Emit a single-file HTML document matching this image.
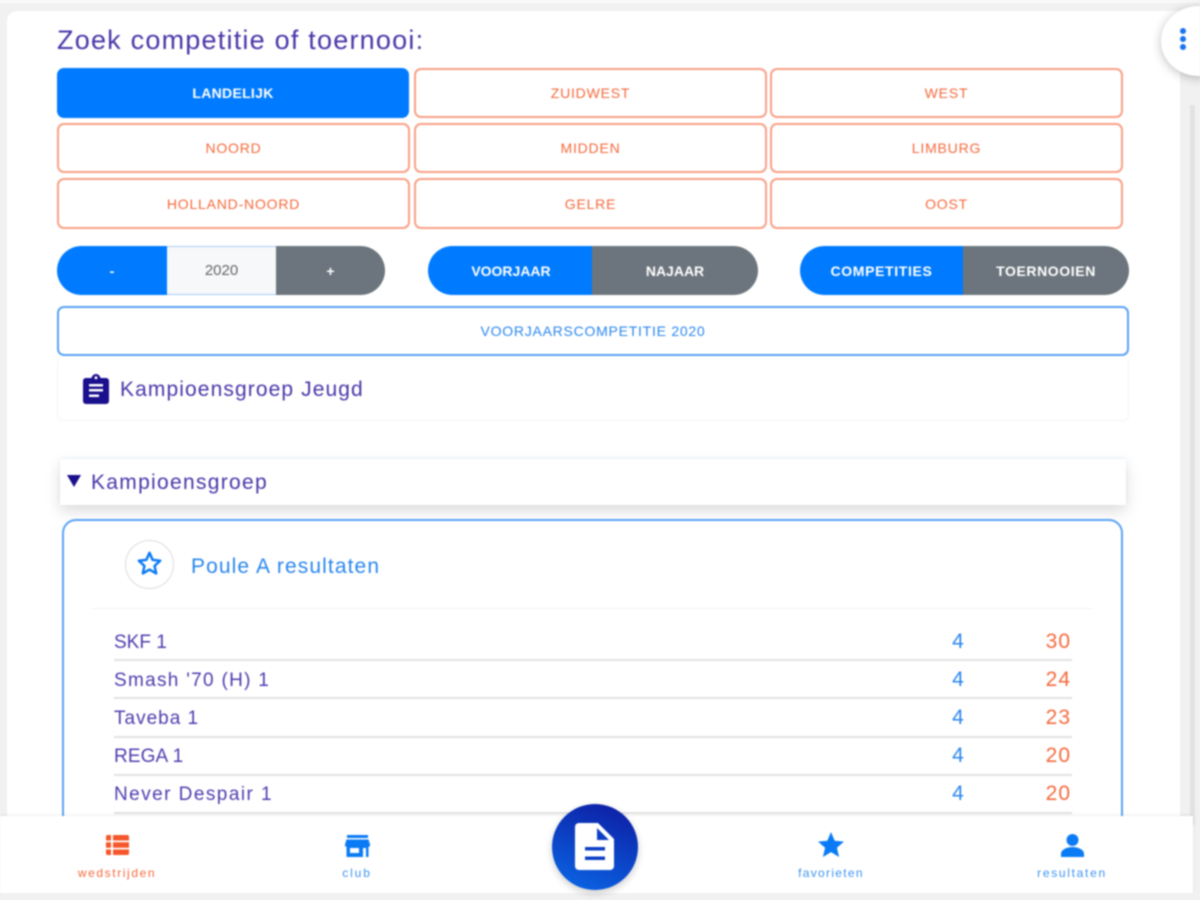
<!DOCTYPE html>
<html><head><meta charset="utf-8"><style>
html,body{margin:0;padding:0;width:1200px;height:900px;overflow:hidden;background:#f1f1f1}
*{box-sizing:border-box}
#w{position:absolute;left:0;top:0;width:1200px;height:900px;filter:blur(.7px);font-family:"Liberation Sans",sans-serif;overflow:hidden}
.a{position:absolute}
.c{display:flex;align-items:center;justify-content:center;position:absolute}
.b{border:2px solid #f9a085;border-radius:7px;color:#f4693c;font-size:14px;letter-spacing:.8px;background:#fff;height:50px;width:353px}
.s{font-size:14px;color:#fff;font-weight:bold;height:49px;top:246px}
.t{left:114px;color:#4f3cae;font-size:19px;line-height:24px;position:absolute}
.n{left:938px;width:40px;text-align:center;color:#2a86ee;font-size:21px;line-height:24px;position:absolute}
.p{left:1010px;width:61px;text-align:right;color:#f4693c;font-size:21px;line-height:24px;letter-spacing:1px;position:absolute}
.l{left:114px;width:958px;height:2px;background:#e2e2e2;position:absolute}
.m{font-size:12px;position:absolute;top:866px;text-align:center;width:120px}
</style></head><body><div id="w">
<div class="a" style="left:0;top:0;width:1200px;height:3px;background:#fafafa"></div>
<div class="a" style="left:7px;top:11px;width:1173px;height:830px;background:#fff;border-radius:10px 0 0 0"></div>
<div class="a" style="left:1190px;top:105px;width:5px;height:720px;background:#e2e2e2"></div>

<div class="a" style="left:57px;top:23px;font-size:27px;line-height:34px;color:#4a35a8;letter-spacing:1.22px">Zoek competitie of toernooi:</div>

<div class="c" style="left:57px;top:68px;width:352px;height:50px;background:#007bff;border-radius:7px;color:#fff;font-size:14px;font-weight:bold;letter-spacing:.3px">LANDELIJK</div>
<div class="c b" style="left:414px;top:68px">ZUIDWEST</div>
<div class="c b" style="left:770px;top:68px">WEST</div>
<div class="c b" style="left:57px;top:123px">NOORD</div>
<div class="c b" style="left:414px;top:123px">MIDDEN</div>
<div class="c b" style="left:770px;top:123px">LIMBURG</div>
<div class="c b" style="left:57px;top:178px;height:51px">HOLLAND-NOORD</div>
<div class="c b" style="left:414px;top:178px;height:51px">GELRE</div>
<div class="c b" style="left:770px;top:178px;height:51px">OOST</div>

<div class="c s" style="left:57px;width:110px;background:#007bff;border-radius:25px 0 0 25px">-</div>
<div class="c s" style="left:167px;width:109px;background:#f6f8fa;color:#666;font-weight:normal;font-size:15px;border-top:1px solid #a9cdfb;border-bottom:1px solid #a9cdfb">2020</div>
<div class="c s" style="left:276px;width:109px;background:#6c757d;border-radius:0 25px 25px 0">+</div>
<div class="c s" style="left:428px;width:164px;background:#007bff;border-radius:25px 0 0 25px;padding-left:2px">VOORJAAR</div>
<div class="c s" style="left:592px;width:166px;background:#6c757d;border-radius:0 25px 25px 0">NAJAAR</div>
<div class="c s" style="left:800px;width:163px;background:#007bff;border-radius:25px 0 0 25px;letter-spacing:.65px">COMPETITIES</div>
<div class="c s" style="left:963px;width:166px;background:#6c757d;border-radius:0 25px 25px 0;letter-spacing:.6px">TOERNOOIEN</div>

<div class="c" style="left:57px;top:306px;width:1072px;height:50px;border:2px solid #5aa2f5;border-radius:7px;color:#2a86ee;font-size:14px;letter-spacing:.75px;background:#fff">VOORJAARSCOMPETITIE 2020</div>

<div class="a" style="left:57px;top:358px;width:1072px;height:63px;border:1px solid #f4f4f4;border-top:0;border-radius:6px"></div>
<svg class="a" style="left:82px;top:373px" width="28" height="32" viewBox="0 0 28 32"><path fill="#1a0f8c" d="M4 5h5.5C10 2.500 12 1 14 1s4 1.500 4.500 4H24c1.600 0 3 1.300 3 3v20c0 1.700-1.400 3-3 3H4c-1.600 0-3-1.300-3-3V8c0-1.700 1.400-3 3-3z"/><path fill="#fff" d="M7 11h14v2.500H7zM7 16h14v2.500H7zM7 21.500h10V24H7z"/><circle cx="14" cy="4.800" r="1.500" fill="#fff"/></svg>
<div class="a" style="left:120px;top:377px;font-size:21px;line-height:26px;color:#4a35a8;letter-spacing:1.1px">Kampioensgroep Jeugd</div>

<div class="a" style="left:60px;top:459px;width:1066px;height:46px;background:#fff;box-shadow:0 6px 14px rgba(0,0,0,.14),0 -1px 3px rgba(0,120,255,.08)"></div>
<div class="a" style="left:67px;top:475px;width:0;height:0;border-left:7px solid transparent;border-right:7px solid transparent;border-top:12px solid #1a0f8c"></div>
<div class="a" style="left:91px;top:470px;font-size:21px;line-height:26px;color:#4a35a8;letter-spacing:1.3px">Kampioensgroep</div>

<div class="a" style="left:62px;top:519px;width:1061px;height:340px;border:2px solid #5aa2f5;border-radius:14px;background:#fff"></div>
<div class="a" style="left:125px;top:540px;width:49px;height:49px;border:1px solid #ddd;border-radius:50%"></div>
<svg class="a" style="left:136px;top:550px" width="27" height="27" viewBox="0 0 24 24"><path fill="none" stroke="#0a7bf5" stroke-width="2.200" stroke-linejoin="round" d="M12 2.500l2.800 6.300 6.700.7-5 4.600 1.400 6.700L12 17.400l-5.900 3.400 1.400-6.700-5-4.600 6.700-.7z"/></svg>
<div class="a" style="left:191px;top:554px;font-size:21px;line-height:26px;color:#2a86ee;letter-spacing:1.1px">Poule A resultaten</div>
<div class="a" style="left:92px;top:608px;width:1000px;height:1px;background:#f3f3f3"></div>

<div class="t" style="top:631px;letter-spacing:0">SKF 1</div><div class="n" style="top:630px">4</div><div class="p" style="top:630px">30</div><div class="l" style="top:659px"></div>
<div class="t" style="top:669px;letter-spacing:1.3px">Smash '70 (H) 1</div><div class="n" style="top:668px">4</div><div class="p" style="top:668px">24</div><div class="l" style="top:697px"></div>
<div class="t" style="top:707px;letter-spacing:1px">Taveba 1</div><div class="n" style="top:706px">4</div><div class="p" style="top:706px">23</div><div class="l" style="top:736px"></div>
<div class="t" style="top:745px;letter-spacing:.1px">REGA 1</div><div class="n" style="top:744px">4</div><div class="p" style="top:744px">20</div><div class="l" style="top:774px"></div>
<div class="t" style="top:783px;letter-spacing:1.45px">Never Despair 1</div><div class="n" style="top:782px">4</div><div class="p" style="top:782px">20</div><div class="l" style="top:812px"></div>

<div class="a" style="left:0;top:816px;width:1193px;height:77px;background:#fff;box-shadow:0 -1px 3px rgba(0,0,0,.08)"></div>
<div class="a" style="left:0;top:893px;width:1200px;height:7px;background:#f1f1f1"></div>

<svg class="a" style="left:106px;top:835px" width="23" height="20" viewBox="0 0 23 20"><path fill="#f5562a" d="M0 1.500C0 .7.700 0 1.500 0H5v5.500H0zM7 0h14.500c.8 0 1.500.7 1.500 1.500v4H7zM0 7.200h5v5.600H0zM7 7.200h16v5.600H7zM0 14.500h5V20H1.500C.7 20 0 19.300 0 18.500zM7 14.500h16v4c0 .8-.7 1.500-1.500 1.500H7z"/></svg>
<div class="m" style="left:57px;color:#f4693c;letter-spacing:1.6px">wedstrijden</div>

<svg class="a" style="left:345px;top:835px" width="25" height="22" viewBox="0 0 25 22"><path fill="#0a7bf5" d="M2 0h21v3H2zM1.500 4.500h22l1.500 5v2h-1.500V22h-22V11.500H0v-2z"/><path fill="#fff" d="M5 13h9v5H5zM18 13h3v9h-3z"/></svg>
<div class="m" style="left:297px;color:#3d93f0;letter-spacing:1.9px">club</div>

<div class="a" style="left:552px;top:804px;width:86px;height:86px;border-radius:50%;background:linear-gradient(20deg,#0a68e8,#0d1aa0);box-shadow:0 3px 8px rgba(0,0,0,.2)"></div>
<svg class="a" style="left:575px;top:823px" width="39" height="47" viewBox="0 0 39 47"><path fill="#fff" d="M4 0h19l16 16v27c0 2.200-1.800 4-4 4H4c-2.200 0-4-1.800-4-4V4c0-2.200 1.800-4 4-4z"/><path fill="#0c3fc4" d="M22 5v12h12zM10 24h20v3.500H10zM10 33.500h20V37H10z"/></svg>

<svg class="a" style="left:818px;top:832px" width="26" height="25" viewBox="0 0 26 25"><path fill="#0a7bf5" d="M13 0l3.700 8.800 9.300.8-7.100 6.200 2.200 9.200L13 20.100 4.900 25l2.200-9.200L0 9.600l9.300-.8z"/></svg>
<div class="m" style="left:771px;color:#3d93f0;letter-spacing:1.3px">favorieten</div>

<svg class="a" style="left:1061px;top:834px" width="23" height="23" viewBox="0 0 23 23"><circle cx="11.500" cy="6" r="6" fill="#0a7bf5"/><path fill="#0a7bf5" d="M0 20c0-5 7-7 11.500-7S23 15 23 20v3H0z"/></svg>
<div class="m" style="left:1012px;color:#3d93f0;letter-spacing:1.7px">resultaten</div>

<div class="a" style="left:1161px;top:6px;width:76px;height:70px;border-radius:50%;background:#fff;box-shadow:0 2px 10px rgba(0,0,0,.25)"></div>
<div class="a" style="left:1180px;top:28px;width:6px;height:6px;border-radius:50%;background:#1a73f0"></div>
<div class="a" style="left:1180px;top:36px;width:6px;height:6px;border-radius:50%;background:#1a73f0"></div>
<div class="a" style="left:1180px;top:44px;width:6px;height:6px;border-radius:50%;background:#1a73f0"></div>
</div></body></html>
